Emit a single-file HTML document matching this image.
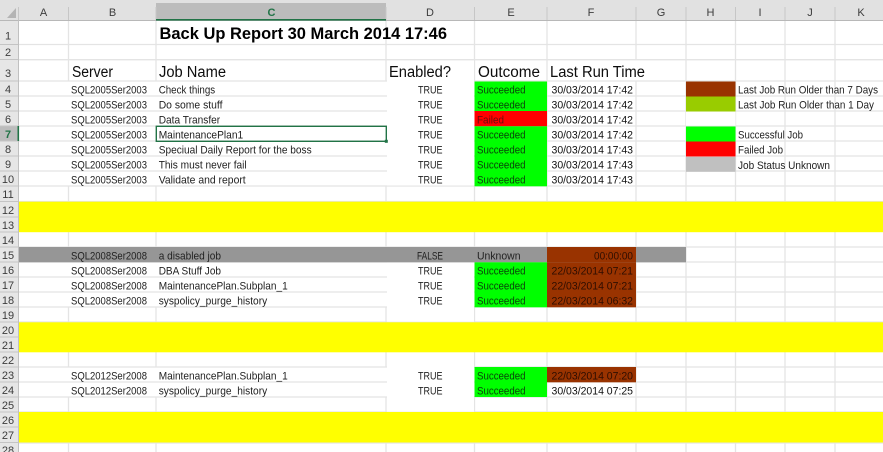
<!DOCTYPE html>
<html><head><meta charset="utf-8"><style>
html,body{margin:0;padding:0;background:#fff;width:883px;height:452px;overflow:hidden}
svg{display:block}
text{font-family:"Liberation Sans",sans-serif}
.d{font-size:10.6px;fill:#222;transform:translateY(.4px)}
.h{font-size:15.5px;fill:#0a0a0a}
.c{font-size:11px;fill:#3c3c3c;text-anchor:middle}
.r{font-size:11px;fill:#3c3c3c;text-anchor:middle}
.g{stroke:#e4e4e4;stroke-width:1.3;fill:none}
.s{fill:#0a3f0a}
.t{fill:#111}
.o{fill:#2e0e00}
</style></head><body>
<svg width="883" height="452" viewBox="0 0 883 452" xmlns="http://www.w3.org/2000/svg">
<defs><filter id="b" x="0" y="0" width="100%" height="100%"><feGaussianBlur stdDeviation="0.3"/></filter></defs>
<rect width="883" height="452" fill="#fff"/>

<!-- horizontal grid -->
<path class="g" d="M19 44.5H883M19 59.7H883M19 81H883M19 96H883M19 111H883M19 126H883M19 141H883M19 156H883M19 171H883M19 186H883M19 201.5H883M19 247H883M19 262H883M19 277H883M19 292H883M19 307H883M19 322H883M19 367H883M19 382H883M19 397H883M19 412H883"/>
<!-- vertical grid: upper -->
<path class="g" d="M68.5 20V81M156 20V81M386 20V81M474.5 20V81M547 20V81M636 20V60M686 20V201M735.5 20V201M785 20V201M835 20V201"/>
<path class="g" d="M636 81V201M547 81V201M474.5 186V201M386 186V201M156 186V201M68.5 186V201"/>
<path class="g" d="M68.5 232V247M156 232V247M386 232V247M474.5 232V247M547 232V247M636 232V247M686 232V322M735.5 232V322M785 232V322M835 232V322"/>
<path class="g" d="M68.5 307V322M156 307V322M386 307V322M474.5 307V322M547 307V322M636 262V322"/>
<path class="g" d="M68.5 352V367M156 352V367M386 352V367M474.5 352V367M547 352V412M636 352V412M686 352V412M735.5 352V412M785 352V412M835 352V412"/>
<path class="g" d="M68.5 397V412M156 397V412M386 397V412M474.5 397V412"/>
<path class="g" d="M68.5 442.5V452M156 442.5V452M386 442.5V452M474.5 442.5V452M547 442.5V452M636 442.5V452M686 442.5V452M735.5 442.5V452M785 442.5V452M835 442.5V452M19 443H883"/>

<!-- white D column masks -->
<rect x="387" y="60.5" width="87" height="125" fill="#fff"/>
<rect x="387" y="262.7" width="87" height="59" fill="#fff"/>
<rect x="387" y="352.7" width="87" height="59" fill="#fff"/>

<!-- fills -->
<rect x="19" y="201.7" width="864" height="30.5" fill="#ffff00"/>
<rect x="19" y="322.3" width="864" height="30" fill="#ffff00"/>
<rect x="19" y="412" width="864" height="30.5" fill="#ffff00"/>
<rect x="19" y="247" width="667" height="15.3" fill="#969696"/>
<rect x="547" y="247" width="89" height="15.3" fill="#993300"/>
<rect x="474.5" y="81.5" width="72.5" height="29.5" fill="#00ff00"/>
<rect x="474.5" y="111" width="72.5" height="15.3" fill="#ff0000"/>
<rect x="474.5" y="126.3" width="72.5" height="60" fill="#00ff00"/>
<rect x="474.5" y="262.3" width="72.5" height="45" fill="#00ff00"/>
<rect x="547" y="262.3" width="89" height="45" fill="#993300"/>
<rect x="474.5" y="367" width="72.5" height="30" fill="#00ff00"/>
<rect x="547" y="367" width="89" height="15.3" fill="#993300"/>
<rect x="686" y="81.5" width="49.5" height="15" fill="#993300"/>
<rect x="686" y="96.5" width="49.5" height="15" fill="#99cc00"/>
<rect x="686" y="126.5" width="49.5" height="15" fill="#00ff00"/>
<rect x="686" y="141.5" width="49.5" height="15" fill="#ff0000"/>
<rect x="686" y="156.8" width="49.5" height="15" fill="#c0c0c0"/>
<rect x="686" y="111.7" width="49.5" height="14" fill="#fff"/>

<!-- headers -->
<rect x="0" y="0" width="883" height="20" fill="#e1e1e1"/>
<rect x="0" y="20" width="19" height="432" fill="#e6e6e6"/>
<rect x="156" y="3" width="230" height="17" fill="#bcbcbc"/>
<rect x="0" y="126" width="19" height="15" fill="#bcbcbc"/>
<path d="M7 18H16V8Z" fill="#b4b4b4"/>
<path stroke="#c6c6c6" stroke-width="1" fill="none" d="M68.5 7V20M156 7V20M386 7V20M474.5 7V20M547 7V20M636 7V20M686 7V20M735.5 7V20M785 7V20M835 7V20M18.5 7V20"/>
<path stroke="#c4c4c4" stroke-width="1" fill="none" d="M0 44.5H19M0 59.5H19M0 81H19M0 96H19M0 111H19M0 126H19M0 141H19M0 156H19M0 171H19M0 186H19M0 201.5H19M0 217H19M0 232H19M0 247H19M0 262H19M0 277H19M0 292H19M0 307H19M0 322H19M0 337H19M0 352H19M0 367H19M0 382H19M0 397H19M0 412H19M0 427H19M0 442.5H19"/>
<rect x="0" y="20" width="883" height="1" fill="#b8b8b8"/>
<rect x="18" y="20" width="1" height="432" fill="#c0c0c0"/>
<rect x="156" y="19" width="230" height="1.6" fill="#217346"/>
<rect x="17.5" y="126" width="1.6" height="15" fill="#217346"/>

<g filter="url(#b)">
<text class="c" x="43.5" y="16">A</text>
<text class="c" x="112.5" y="16">B</text>
<text class="c" x="271.5" y="16" style="fill:#217346;font-weight:bold">C</text>
<text class="c" x="430" y="16">D</text>
<text class="c" x="511" y="16">E</text>
<text class="c" x="591" y="16">F</text>
<text class="c" x="661" y="16">G</text>
<text class="c" x="710.5" y="16">H</text>
<text class="c" x="760" y="16">I</text>
<text class="c" x="810" y="16">J</text>
<text class="c" x="861" y="16">K</text>

<text class="r" x="8" y="39.5">1</text>
<text class="r" x="8" y="56">2</text>
<text class="r" x="8" y="77">3</text>
<text class="r" x="8" y="93">4</text>
<text class="r" x="8" y="108">5</text>
<text class="r" x="8" y="123">6</text>
<text class="r" x="8" y="138" style="fill:#217346;font-weight:bold">7</text>
<text class="r" x="8" y="153">8</text>
<text class="r" x="8" y="168">9</text>
<text class="r" x="8" y="183">10</text>
<text class="r" x="8" y="198">11</text>
<text class="r" x="8" y="214">12</text>
<text class="r" x="8" y="229">13</text>
<text class="r" x="8" y="244">14</text>
<text class="r" x="8" y="259">15</text>
<text class="r" x="8" y="274">16</text>
<text class="r" x="8" y="289">17</text>
<text class="r" x="8" y="304">18</text>
<text class="r" x="8" y="319">19</text>
<text class="r" x="8" y="334">20</text>
<text class="r" x="8" y="349">21</text>
<text class="r" x="8" y="364">22</text>
<text class="r" x="8" y="379">23</text>
<text class="r" x="8" y="394">24</text>
<text class="r" x="8" y="409">25</text>
<text class="r" x="8" y="424">26</text>
<text class="r" x="8" y="439">27</text>
<text class="r" x="8" y="454">28</text>

<text x="159.5" y="39" font-size="17" font-weight="bold" fill="#050505" textLength="287.5" lengthAdjust="spacingAndGlyphs">Back Up Report 30 March 2014 17:46</text>

<text class="h" x="72" y="77" textLength="41" lengthAdjust="spacingAndGlyphs">Server</text>
<text class="h" x="159" y="77" textLength="67" lengthAdjust="spacingAndGlyphs">Job Name</text>
<text class="h" x="389" y="77" textLength="62" lengthAdjust="spacingAndGlyphs">Enabled?</text>
<text class="h" x="478" y="77" textLength="62" lengthAdjust="spacingAndGlyphs">Outcome</text>
<text class="h" x="550" y="77" textLength="95" lengthAdjust="spacingAndGlyphs">Last Run Time</text>

<!-- server names -->
<text class="d" x="71" y="93" textLength="76" lengthAdjust="spacingAndGlyphs">SQL2005Ser2003</text>
<text class="d" x="71" y="108" textLength="76" lengthAdjust="spacingAndGlyphs">SQL2005Ser2003</text>
<text class="d" x="71" y="123" textLength="76" lengthAdjust="spacingAndGlyphs">SQL2005Ser2003</text>
<text class="d" x="71" y="138" textLength="76" lengthAdjust="spacingAndGlyphs">SQL2005Ser2003</text>
<text class="d" x="71" y="153" textLength="76" lengthAdjust="spacingAndGlyphs">SQL2005Ser2003</text>
<text class="d" x="71" y="168" textLength="76" lengthAdjust="spacingAndGlyphs">SQL2005Ser2003</text>
<text class="d" x="71" y="183" textLength="76" lengthAdjust="spacingAndGlyphs">SQL2005Ser2003</text>
<text class="d" x="71" y="259" textLength="76" lengthAdjust="spacingAndGlyphs">SQL2008Ser2008</text>
<text class="d" x="71" y="274" textLength="76" lengthAdjust="spacingAndGlyphs">SQL2008Ser2008</text>
<text class="d" x="71" y="289" textLength="76" lengthAdjust="spacingAndGlyphs">SQL2008Ser2008</text>
<text class="d" x="71" y="304" textLength="76" lengthAdjust="spacingAndGlyphs">SQL2008Ser2008</text>
<text class="d" x="71" y="379" textLength="76" lengthAdjust="spacingAndGlyphs">SQL2012Ser2008</text>
<text class="d" x="71" y="394" textLength="76" lengthAdjust="spacingAndGlyphs">SQL2012Ser2008</text>

<!-- job names -->
<text class="d" x="158.7" y="93" textLength="56.5" lengthAdjust="spacingAndGlyphs">Check things</text>
<text class="d" x="158.7" y="108" textLength="63.8" lengthAdjust="spacingAndGlyphs">Do some stuff</text>
<text class="d" x="158.7" y="123" textLength="61.5" lengthAdjust="spacingAndGlyphs">Data Transfer</text>
<text class="d" x="158.7" y="138" textLength="84.5" lengthAdjust="spacingAndGlyphs">MaintenancePlan1</text>
<text class="d" x="158.7" y="153" textLength="153" lengthAdjust="spacingAndGlyphs">Speciual Daily Report for the boss</text>
<text class="d" x="158.7" y="168" textLength="88" lengthAdjust="spacingAndGlyphs">This must never fail</text>
<text class="d" x="158.7" y="183" textLength="87" lengthAdjust="spacingAndGlyphs">Validate and report</text>
<text class="d" x="158.7" y="259" textLength="62.3" lengthAdjust="spacingAndGlyphs">a disabled job</text>
<text class="d" x="158.7" y="274" textLength="62.3" lengthAdjust="spacingAndGlyphs">DBA Stuff Job</text>
<text class="d" x="158.7" y="289" textLength="129" lengthAdjust="spacingAndGlyphs">MaintenancePlan.Subplan_1</text>
<text class="d" x="158.7" y="304" textLength="108.5" lengthAdjust="spacingAndGlyphs">syspolicy_purge_history</text>
<text class="d" x="158.7" y="379" textLength="129" lengthAdjust="spacingAndGlyphs">MaintenancePlan.Subplan_1</text>
<text class="d" x="158.7" y="394" textLength="108.5" lengthAdjust="spacingAndGlyphs">syspolicy_purge_history</text>

<!-- enabled -->
<text class="d" x="418" y="93" textLength="24.5" lengthAdjust="spacingAndGlyphs">TRUE</text>
<text class="d" x="418" y="108" textLength="24.5" lengthAdjust="spacingAndGlyphs">TRUE</text>
<text class="d" x="418" y="123" textLength="24.5" lengthAdjust="spacingAndGlyphs">TRUE</text>
<text class="d" x="418" y="138" textLength="24.5" lengthAdjust="spacingAndGlyphs">TRUE</text>
<text class="d" x="418" y="153" textLength="24.5" lengthAdjust="spacingAndGlyphs">TRUE</text>
<text class="d" x="418" y="168" textLength="24.5" lengthAdjust="spacingAndGlyphs">TRUE</text>
<text class="d" x="418" y="183" textLength="24.5" lengthAdjust="spacingAndGlyphs">TRUE</text>
<text class="d" x="417" y="259" textLength="26" lengthAdjust="spacingAndGlyphs">FALSE</text>
<text class="d" x="418" y="274" textLength="24.5" lengthAdjust="spacingAndGlyphs">TRUE</text>
<text class="d" x="418" y="289" textLength="24.5" lengthAdjust="spacingAndGlyphs">TRUE</text>
<text class="d" x="418" y="304" textLength="24.5" lengthAdjust="spacingAndGlyphs">TRUE</text>
<text class="d" x="418" y="379" textLength="24.5" lengthAdjust="spacingAndGlyphs">TRUE</text>
<text class="d" x="418" y="394" textLength="24.5" lengthAdjust="spacingAndGlyphs">TRUE</text>

<!-- outcome -->
<text class="d s" x="477" y="93" textLength="48.5" lengthAdjust="spacingAndGlyphs">Succeeded</text>
<text class="d s" x="477" y="108" textLength="48.5" lengthAdjust="spacingAndGlyphs">Succeeded</text>
<text class="d" x="477" y="123" textLength="27" lengthAdjust="spacingAndGlyphs" style="fill:#6e0c0c">Failed</text>
<text class="d s" x="477" y="138" textLength="48.5" lengthAdjust="spacingAndGlyphs">Succeeded</text>
<text class="d s" x="477" y="153" textLength="48.5" lengthAdjust="spacingAndGlyphs">Succeeded</text>
<text class="d s" x="477" y="168" textLength="48.5" lengthAdjust="spacingAndGlyphs">Succeeded</text>
<text class="d s" x="477" y="183" textLength="48.5" lengthAdjust="spacingAndGlyphs">Succeeded</text>
<text class="d" x="477" y="259" textLength="43.5" lengthAdjust="spacingAndGlyphs">Unknown</text>
<text class="d s" x="477" y="274" textLength="48.5" lengthAdjust="spacingAndGlyphs">Succeeded</text>
<text class="d s" x="477" y="289" textLength="48.5" lengthAdjust="spacingAndGlyphs">Succeeded</text>
<text class="d s" x="477" y="304" textLength="48.5" lengthAdjust="spacingAndGlyphs">Succeeded</text>
<text class="d s" x="477" y="379" textLength="48.5" lengthAdjust="spacingAndGlyphs">Succeeded</text>
<text class="d s" x="477" y="394" textLength="48.5" lengthAdjust="spacingAndGlyphs">Succeeded</text>

<!-- last run -->
<text class="d t" x="551.5" y="93" textLength="81.5" lengthAdjust="spacingAndGlyphs">30/03/2014 17:42</text>
<text class="d t" x="551.5" y="108" textLength="81.5" lengthAdjust="spacingAndGlyphs">30/03/2014 17:42</text>
<text class="d t" x="551.5" y="123" textLength="81.5" lengthAdjust="spacingAndGlyphs">30/03/2014 17:42</text>
<text class="d t" x="551.5" y="138" textLength="81.5" lengthAdjust="spacingAndGlyphs">30/03/2014 17:42</text>
<text class="d t" x="551.5" y="153" textLength="81.5" lengthAdjust="spacingAndGlyphs">30/03/2014 17:43</text>
<text class="d t" x="551.5" y="168" textLength="81.5" lengthAdjust="spacingAndGlyphs">30/03/2014 17:43</text>
<text class="d t" x="551.5" y="183" textLength="81.5" lengthAdjust="spacingAndGlyphs">30/03/2014 17:43</text>
<text class="d o" x="594" y="259" textLength="39" lengthAdjust="spacingAndGlyphs">00:00:00</text>
<text class="d o" x="551.5" y="274" textLength="81.5" lengthAdjust="spacingAndGlyphs">22/03/2014 07:21</text>
<text class="d o" x="551.5" y="289" textLength="81.5" lengthAdjust="spacingAndGlyphs">22/03/2014 07:21</text>
<text class="d o" x="551.5" y="304" textLength="81.5" lengthAdjust="spacingAndGlyphs">22/03/2014 06:32</text>
<text class="d o" x="551.5" y="379" textLength="81.5" lengthAdjust="spacingAndGlyphs">22/03/2014 07:20</text>
<text class="d t" x="551.5" y="394" textLength="81.5" lengthAdjust="spacingAndGlyphs">30/03/2014 07:25</text>

<!-- legend -->
<text class="d" x="738" y="93" textLength="140" lengthAdjust="spacingAndGlyphs">Last Job Run Older than 7 Days</text>
<text class="d" x="738" y="108" textLength="136" lengthAdjust="spacingAndGlyphs">Last Job Run Older than 1 Day</text>
<text class="d" x="738" y="138" textLength="65" lengthAdjust="spacingAndGlyphs">Successful Job</text>
<text class="d" x="738" y="153" textLength="45" lengthAdjust="spacingAndGlyphs">Failed Job</text>
<text class="d" x="738" y="168.5" textLength="92" lengthAdjust="spacingAndGlyphs">Job Status Unknown</text>
</g>

<!-- selection -->
<rect x="156.3" y="126.3" width="230" height="15" fill="none" stroke="#217346" stroke-width="1.4"/>
<rect x="384.8" y="139.8" width="3" height="3" fill="#217346"/>
</svg>
</body></html>
